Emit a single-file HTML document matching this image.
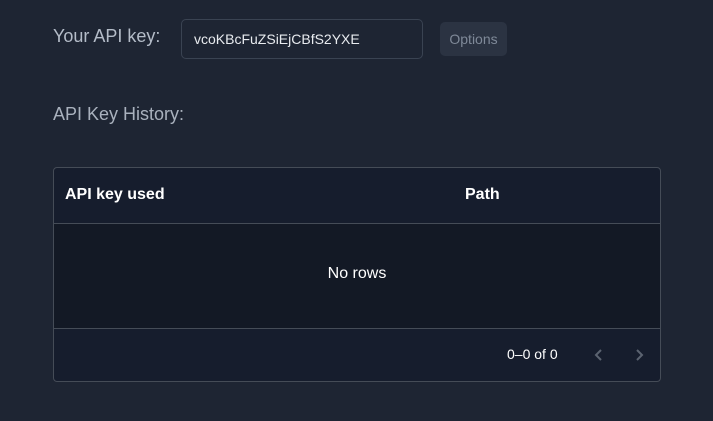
<!DOCTYPE html>
<html><head><style>
body{margin:0;width:713px;height:421px;background:#1e2533;font-family:"Liberation Sans",sans-serif;position:relative;overflow:hidden}
.a{position:absolute}
</style></head><body>
<div class="a" style="left:53px;top:26px;font-size:18px;color:#b4bcc8">Your API key:</div>
<div class="a" style="left:181px;top:19px;width:240px;height:38px;border:1px solid #3a4352;border-radius:5px;box-sizing:content-box"></div>
<div class="a" style="left:194px;top:31px;font-size:14px;color:#e8ebef">vcoKBcFuZSiEjCBfS2YXE</div>
<div class="a" style="left:440px;top:22px;width:67px;height:34px;background:#2b3342;border-radius:5px;color:#7f8998;font-size:14px;line-height:34px;text-align:center">Options</div>
<div class="a" style="left:53px;top:104px;font-size:18px;color:#a9b1bd">API Key History:</div>
<div class="a" style="left:53px;top:167px;width:606px;height:213px;border:1px solid #454c57;border-radius:4px;background:#161d2d;overflow:hidden">
 <div class="a" style="left:0;top:0;width:606px;height:55px;border-bottom:1px solid #454c57"></div>
 <div class="a" style="left:11px;top:18px;font-size:16px;font-weight:bold;color:#fff">API key used</div>
 <div class="a" style="left:411px;top:18px;font-size:16px;font-weight:bold;color:#fff">Path</div>
 <div class="a" style="left:0;top:56px;width:606px;height:104px;background:#131925;border-bottom:1px solid #454c57"></div>
 <div class="a" style="left:0;top:97px;width:606px;text-align:center;font-size:16px;color:#fff">No rows</div>
 <div class="a" style="left:453px;top:178px;font-size:14px;color:#fff">0–0 of 0</div>
 <svg class="a" style="left:538px;top:179px" width="14" height="16"><path d="M9 3 L4 8 L9 13" stroke="#5b6370" stroke-width="2" fill="none"/></svg>
 <svg class="a" style="left:578px;top:179px" width="14" height="16"><path d="M5 3 L10 8 L5 13" stroke="#5b6370" stroke-width="2" fill="none"/></svg>
</div>
</body></html>
